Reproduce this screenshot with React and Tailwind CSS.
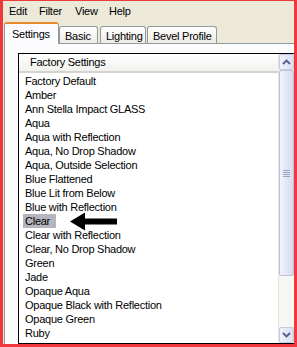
import React from 'react'

const ITEMS = [
  'Factory Default',
  'Amber',
  'Ann Stella Impact GLASS',
  'Aqua',
  'Aqua with Reflection',
  'Aqua, No Drop Shadow',
  'Aqua, Outside Selection',
  'Blue Flattened',
  'Blue Lit from Below',
  'Blue with Reflection',
  'Clear',
  'Clear with Reflection',
  'Clear, No Drop Shadow',
  'Green',
  'Jade',
  'Opaque Aqua',
  'Opaque Black with Reflection',
  'Opaque Green',
  'Ruby',
]

const Tab = ({ label, active, w }) =>
  active ? (
    <div className={`relative z-10 -mb-px h-[22px] rounded-t-[3px] border border-b-0 border-[#919b9c] border-t-[#e68b2c] border-t-2 bg-[#fcfcfe] pl-[7px] pt-[2px] ${w}`}>
      {label}
    </div>
  ) : (
    <div className={`mt-[4px] h-[17px] rounded-t-[3px] border border-b-0 border-[#919b9c] bg-gradient-to-b from-white to-[#ecebe6] pl-[5px] pt-[1px] ${w}`}>
      {label}
    </div>
  )

const Chevron = ({ up }) => (
  <svg width="9" height="6" viewBox="0 0 9 6">
    <path d={up ? 'M1 5 L4.5 1.5 L8 5' : 'M1 1 L4.5 4.5 L8 1'} fill="none" stroke="#4d6185" strokeWidth="1.8" />
  </svg>
)

export default function App() {
  return (
    <div className="h-[347px] w-[297px] overflow-hidden border-x-[3px] border-t-[1px] border-b-[3px] border-[#f0393c] bg-[#ece9d8] text-[11px] tracking-[-0.25px] text-black" style={{ fontFamily: '"Liberation Sans", Arial, sans-serif' }}>
      {/* menu */}
      <div className="flex h-[21px] items-center pl-[6px]">
        <span className="w-[30px]">Edit</span>
        <span className="w-[36px]">Filter</span>
        <span className="w-[34px]">View</span>
        <span>Help</span>
      </div>

      {/* tabs */}
      <div className="flex h-[21px] items-start pl-[1px]">
        <Tab label="Settings" active w="w-[55px]" />
        <Tab label="Basic" w="w-[39px]" />
        <div className="ml-[2px]" />
        <Tab label="Lighting" w="w-[46px]" />
        <div className="ml-[1px]" />
        <Tab label="Bevel Profile" w="w-[70px]" />
      </div>

      {/* panel */}
      <div className="ml-[1px] h-[400px] border-l border-t border-[#919b9c] bg-[#fcfcfe] pl-[13px] pt-[9px]">
        <div className="flex border border-r-0 border-black bg-white">
          <div className="flex-1">
            <div className="flex h-[19px] items-center border-b-2 border-[#d6d3ce] bg-gradient-to-b from-white to-[#f1f1ee] pl-[11px]">
              Factory Settings
            </div>
            <div className="pt-[1px]">
              {ITEMS.map((it) => (
                <div key={it} className="flex h-[14px] items-center pl-[6px] leading-[14px]">
                  {it === 'Clear' ? (
                    <>
                      <span className="-ml-[2px] w-[33px] bg-[#b5b5bd] pl-[2px]">{it}</span>
                      <svg className="ml-[14px]" width="48" height="19" viewBox="0 0 48 19">
                        <polygon points="0,9.5 15,0.5 15,6.5 47,6.5 47,12.5 15,12.5 15,18.5" fill="#000" />
                      </svg>
                    </>
                  ) : (
                    it
                  )}
                </div>
              ))}
            </div>
          </div>

          {/* scrollbar */}
          <div className="flex w-[16px] flex-col border-l border-[#e6e6e6] bg-[#f4f4f0]">
            <div className="flex h-[16px] items-center justify-center rounded-[2px] border border-[#c5cbe0] bg-gradient-to-r from-[#f0f2fb] to-[#d9def2]">
              <Chevron up />
            </div>
            <div className="flex h-[206px] flex-col items-center justify-center rounded-[2px] border border-[#bcc2da] bg-gradient-to-r from-[#f1f3fb] to-[#d6dbef]">
              <div className="flex flex-col gap-[1px]">
                <div className="h-px w-[7px] bg-[#9aa3bf]" />
                <div className="h-px w-[7px] bg-[#9aa3bf]" />
                <div className="h-px w-[7px] bg-[#9aa3bf]" />
                <div className="h-px w-[7px] bg-[#9aa3bf]" />
              </div>
            </div>
            <div className="h-[51px] bg-[#f6f6f3]" />
            <div className="flex h-[16px] items-center justify-center rounded-[2px] border border-[#c5cbe0] bg-gradient-to-r from-[#f0f2fb] to-[#d9def2]">
              <Chevron />
            </div>
          </div>
        </div>
      </div>
    </div>
  )
}
